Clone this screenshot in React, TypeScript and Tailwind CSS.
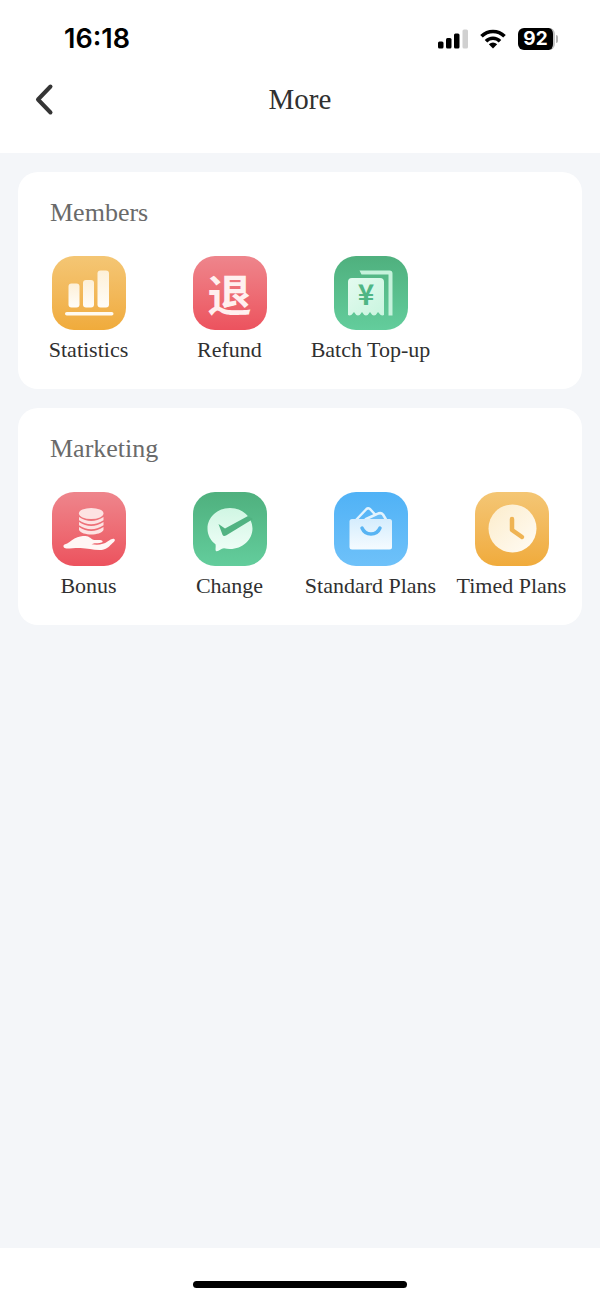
import type { ReactNode } from 'react';

interface MenuItem {
  label: string;
  color: string;
  icon: ReactNode;
}

interface MenuSection {
  title: string;
  items: MenuItem[];
}

const yellow = 'from-[#f4c674] to-[#f0ab3b]';
const red = 'from-[#ee858c] to-[#ec525e]';
const green = 'from-[#4fb07e] to-[#63cd9c]';
const blue = 'from-[#50b2f6] to-[#6ec1f9]';

function StatisticsIcon() {
  return (
    <svg viewBox="0 0 74 74" className="size-full" aria-hidden="true">
      <defs>
        <linearGradient id="bars" x1="0" y1="0" x2="0" y2="1">
          <stop offset="0" stopColor="#fdf0d8" />
          <stop offset="1" stopColor="#fffdf8" />
        </linearGradient>
      </defs>
      <rect x="16.5" y="27.5" width="11" height="24" rx="3" fill="url(#bars)" />
      <rect x="31" y="24" width="11" height="27.5" rx="3" fill="url(#bars)" />
      <rect x="45.5" y="14.5" width="11.5" height="37" rx="3" fill="url(#bars)" />
      <rect x="13" y="56" width="48.5" height="3.5" rx="1.75" fill="#fffaf0" />
    </svg>
  );
}

function BatchIcon() {
  return (
    <svg viewBox="0 0 74 74" className="size-full" aria-hidden="true">
      <defs>
        <linearGradient id="receipt" x1="0" y1="0" x2="1" y2="1">
          <stop offset="0" stopColor="#e4fbef" />
          <stop offset="1" stopColor="#c9f5df" />
        </linearGradient>
      </defs>
      <path d="M25.5 14.5h30a3 3 0 0 1 3 3v42h-4V18.5H27.5z" fill="#c6f2dc" />
      <path
        d="M18 22h28a4 4 0 0 1 4 4v33q-3 1.500-6-3-4 7-8 0-4 7-8 0-4 7-8 0-3 4.500-6 3V26a4 4 0 0 1 4-4z"
        fill="url(#receipt)"
      />
      <text
        x="32"
        y="49"
        textAnchor="middle"
        fill="#4fb685"
        className="font-['Noto_Sans_CJK_SC',sans-serif] text-[28px] font-bold"
      >
        ¥
      </text>
    </svg>
  );
}

function BonusIcon() {
  return (
    <svg viewBox="0 0 74 74" className="size-full" aria-hidden="true">
      <g fill="#fde3e3">
        <path d="M27 35q12 8 24.500 0v3c-3 6-21.500 6-24.500 0z" />
        <path d="M27 30q12 8 24.500 0v3.200q-12.500 8-24.500 0z" />
        <path d="M27 25q12 8 24.500 0v3.200q-12.500 8-24.500 0z" />
        <ellipse cx="39.2" cy="21.5" rx="12.3" ry="5.5" />
      </g>
      <path
        d="M12.500 52.500c4-1 6-4 10-6 4-2 7.500-2.500 11-2.500 4 0 5.500 3.500 9 4 3 .4 7-.5 8 1 .8 2-3 2.200-8 2.200l-3 1c7 1 12 .3 16-2.700 3-2 5.500-3.500 7-2.300 1.500 1.300-1.500 3.300-4 5.800-3 3.500-6 5-11 5-7 0-12-1.700-19-2-5-.2-9 .5-14 .5-3 0-4-3-2-4z"
        fill="#fff6f5"
      />
    </svg>
  );
}

function ChangeIcon() {
  return (
    <svg viewBox="0 0 74 74" className="size-full" aria-hidden="true">
      <defs>
        <linearGradient id="bubble" x1="0" y1="0" x2="0" y2="1">
          <stop offset="0" stopColor="#d0f6e3" />
          <stop offset="1" stopColor="#effef7" />
        </linearGradient>
      </defs>
      <path
        d="M37 16c12.500 0 22.500 9.200 22.500 20.500S49.500 57 37 57c-2 0-4-.2-6-.7-3 .2-5 3.200-7.500 3-1.800-.5-.3-4-1-7C17.500 48.500 14.500 43 14.500 36.500 14.500 25.200 24.500 16 37 16z"
        fill="url(#bubble)"
      />
      <path d="M25.500 32l6.500 4.500L55 24l5 3-27 16.500q-2.500 1.300-3.500-.8z" fill="#51b382" />
    </svg>
  );
}

function BagIcon() {
  return (
    <svg viewBox="0 0 74 74" className="size-full" aria-hidden="true">
      <defs>
        <linearGradient id="bag" x1="0" y1="0" x2="0" y2="1">
          <stop offset="0" stopColor="#d5edfd" />
          <stop offset="1" stopColor="#f5fbff" />
        </linearGradient>
      </defs>
      <path d="M22 28l10.500-11q1.500-1.500 3.500 0l6 6.500" fill="none" stroke="#e2f3fe" strokeWidth="2.5" strokeLinejoin="round" />
      <path d="M31 28l12-5.500q3-1.500 5.500 0l4 5.500z" fill="#6abdf7" />
      <path d="M31 27.500l12-5.500q4-2 6 .5l3 5" fill="none" stroke="#e2f3fe" strokeWidth="2.5" strokeLinejoin="round" />
      <rect x="15.5" y="27" width="42.5" height="30.5" rx="2.5" fill="url(#bag)" />
      <path d="M28 36c3.500 8 14.500 8 18 0" fill="none" stroke="#58b4f3" strokeWidth="3.5" strokeLinecap="round" />
    </svg>
  );
}

function TimedIcon() {
  return (
    <svg viewBox="0 0 74 74" className="size-full" aria-hidden="true">
      <defs>
        <linearGradient id="dial" x1="0" y1="0" x2="1" y2="1">
          <stop offset="0" stopColor="#fceccb" />
          <stop offset="1" stopColor="#fffcf5" />
        </linearGradient>
      </defs>
      <circle cx="37.5" cy="36.5" r="24" fill="url(#dial)" />
      <path
        d="M37 27v11l10 7"
        fill="none"
        stroke="#efb454"
        strokeWidth="4.5"
        strokeLinecap="round"
        strokeLinejoin="round"
      />
    </svg>
  );
}

const sections: MenuSection[] = [
  {
    title: 'Members',
    items: [
      { label: 'Statistics', color: yellow, icon: <StatisticsIcon /> },
      {
        label: 'Refund',
        color: red,
        icon: (
          <span className="font-['Noto_Sans_CJK_SC',sans-serif] text-[44px] leading-none font-bold text-[#fff0ef]">
            退
          </span>
        ),
      },
      { label: 'Batch Top-up', color: green, icon: <BatchIcon /> },
    ],
  },
  {
    title: 'Marketing',
    items: [
      { label: 'Bonus', color: red, icon: <BonusIcon /> },
      { label: 'Change', color: green, icon: <ChangeIcon /> },
      { label: 'Standard Plans', color: blue, icon: <BagIcon /> },
      { label: 'Timed Plans', color: yellow, icon: <TimedIcon /> },
    ],
  },
];

function StatusBar() {
  return (
    <div className="flex h-[78px] items-center justify-between pr-[42px] pl-16 font-['Inter',sans-serif] text-black">
      <span className="text-[27px] font-semibold">16:18</span>
      <div className="flex items-center gap-3">
        <svg viewBox="0 0 30 20" className="h-5 w-[30px]" aria-hidden="true">
          <rect x="0" y="12.5" width="5.5" height="7" rx="1.5" />
          <rect x="8" y="9" width="5.5" height="10.5" rx="1.5" />
          <rect x="16" y="4.5" width="5.5" height="15" rx="1.5" />
          <rect x="24.5" y="0.5" width="5.5" height="19" rx="1.5" fill="#d0d0d0" />
        </svg>
        <svg viewBox="0 0 26 20" className="h-5 w-[26px]" fill="none" stroke="black" strokeWidth="3.6" aria-hidden="true">
          <path d="M1.500 7.300c6.500-6.500 16.500-6.500 23 0" />
          <path d="M6 12.200c4-4 10-4 14 0" />
          <path d="M13 19.500l-4.200-4.300q4.200-3.500 8.400 0z" fill="black" stroke="none" />
        </svg>
        <div className="flex items-center gap-px">
          <div className="flex h-[22px] w-[37px] items-center justify-center rounded-md border-r-2 border-[#c4c4c4] bg-black text-[19px] font-bold text-white">
            92
          </div>
          <div className="h-2 w-[2px] rounded-r-full bg-[#b5b5b5]" />
        </div>
      </div>
    </div>
  );
}

export default function App() {
  return (
    <div className="flex min-h-screen flex-col bg-[#f4f6f9] font-['Liberation_Serif',serif] text-[#303030]">
      <header className="bg-white pb-[33px]">
        <StatusBar />
        <div className="grid grid-cols-[1fr_auto_1fr] items-center px-8">
          <button type="button" aria-label="Back" className="flex size-[42px] items-center">
            <svg
              viewBox="0 0 24 36"
              className="h-9 w-6"
              fill="none"
              stroke="#353535"
              strokeWidth="4"
              strokeLinecap="round"
              strokeLinejoin="round"
              aria-hidden="true"
            >
              <path d="M18.500 5.500L6 18.500l12.500 13" />
            </svg>
          </button>
          <h1 className="text-[29px] leading-[42px]">More</h1>
        </div>
      </header>

      {/* Menu cards */}
      <main className="flex flex-1 flex-col gap-[19px] px-[18px] py-[19px]">
        {sections.map((section) => (
          <section key={section.title} className="rounded-[20px] bg-white pt-[25px] pb-[23px]">
            <h2 className="pl-8 text-[26px] leading-8 text-[#6a6a6a]">{section.title}</h2>
            <div className="mt-[27px] grid grid-cols-4">
              {section.items.map((item) => (
                <button key={item.label} type="button" className="flex flex-col items-center gap-1">
                  <span
                    className={`flex size-[74px] items-center justify-center rounded-[22px] bg-linear-to-b ${item.color}`}
                  >
                    {item.icon}
                  </span>
                  <span className="text-[22px] leading-8 whitespace-nowrap">{item.label}</span>
                </button>
              ))}
            </div>
          </section>
        ))}
      </main>

      {/* Home indicator */}
      <footer className="flex h-[51px] items-end justify-center bg-white pb-[11px]">
        <div className="h-[7px] w-[214px] rounded-full bg-black" />
      </footer>
    </div>
  );
}
